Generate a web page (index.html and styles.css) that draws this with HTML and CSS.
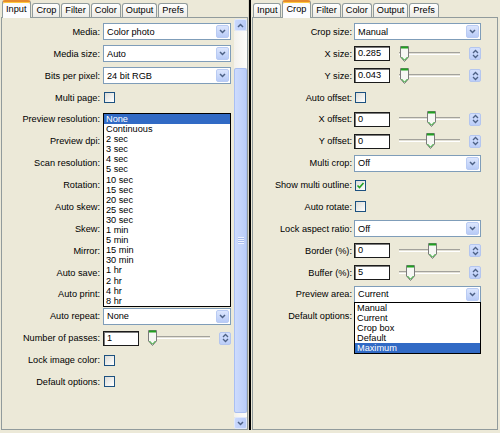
FILE: index.html
```
<!DOCTYPE html>
<html>
<head>
    <meta charset="UTF-8">
    <title>Scanner options</title>
    <link rel="stylesheet" href="styles.css">
</head>
<body>
<div class="window">
    <div class="pane pane-left">
        <div class="tabs">
            <span class="tab tab-on">Input</span>
            <span class="tab">Crop</span>
            <span class="tab">Filter</span>
            <span class="tab">Color</span>
            <span class="tab">Output</span>
            <span class="tab">Prefs</span>
        </div>
        <div class="page">
            <div class="form">
                <div class="row">
                    <span class="lbl">Media:</span>
                    <div class="ctrl"><div class="combo"><span class="combo-text">Color photo</span><span class="combo-btn"><svg width="7" height="5" viewBox="0 0 7 5"><path d="M1 1l2.5 2.5L6 1" fill="none" stroke="#4d6185" stroke-width="1.5"/></svg></span></div></div>
                </div>
                <div class="row">
                    <span class="lbl">Media size:</span>
                    <div class="ctrl"><div class="combo"><span class="combo-text">Auto</span><span class="combo-btn"><svg width="7" height="5" viewBox="0 0 7 5"><path d="M1 1l2.5 2.5L6 1" fill="none" stroke="#4d6185" stroke-width="1.5"/></svg></span></div></div>
                </div>
                <div class="row">
                    <span class="lbl">Bits per pixel:</span>
                    <div class="ctrl"><div class="combo"><span class="combo-text">24 bit RGB</span><span class="combo-btn"><svg width="7" height="5" viewBox="0 0 7 5"><path d="M1 1l2.5 2.5L6 1" fill="none" stroke="#4d6185" stroke-width="1.5"/></svg></span></div></div>
                </div>
                <div class="row">
                    <span class="lbl">Multi page:</span>
                    <div class="ctrl"><span class="check"></span></div>
                </div>
                <div class="row"><span class="lbl">Preview resolution:</span></div>
                <div class="row"><span class="lbl">Preview dpi:</span></div>
                <div class="row"><span class="lbl">Scan resolution:</span></div>
                <div class="row"><span class="lbl">Rotation:</span></div>
                <div class="row"><span class="lbl">Auto skew:</span></div>
                <div class="row"><span class="lbl">Skew:</span></div>
                <div class="row"><span class="lbl">Mirror:</span></div>
                <div class="row"><span class="lbl">Auto save:</span></div>
                <div class="row"><span class="lbl">Auto print:</span></div>
                <div class="row">
                    <span class="lbl">Auto repeat:</span>
                    <div class="ctrl"><div class="combo"><span class="combo-text">None</span><span class="combo-btn"><svg width="7" height="5" viewBox="0 0 7 5"><path d="M1 1l2.5 2.5L6 1" fill="none" stroke="#4d6185" stroke-width="1.5"/></svg></span></div></div>
                </div>
                <div class="row">
                    <span class="lbl">Number of passes:</span>
                    <div class="ctrl">
                        <span class="entry">1</span>
                        <span class="slider"><span class="track"></span><svg class="thumb" style="left: 0px" width="9" height="16" viewBox="0 0 9 16"><path d="M0.5 0.5h8v10.5l-4 4.5-4-4.5z" fill="#f7f7f4" stroke="#7b7b7b"/><path d="M1 1.5h7" stroke="#21a121" stroke-width="2"/><path d="M1.5 11l3 3.2 3-3.2" fill="none" stroke="#21a121"/></svg></span>
                        <span class="spin"><svg width="7" height="10" viewBox="0 0 7 10"><path d="M1 4l2.5-2.5L6 4M1 6l2.5 2.5L6 6" fill="none" stroke="#4d6185" stroke-width="1.3"/></svg></span>
                    </div>
                </div>
                <div class="row">
                    <span class="lbl">Lock image color:</span>
                    <div class="ctrl"><span class="check"></span></div>
                </div>
                <div class="row">
                    <span class="lbl">Default options:</span>
                    <div class="ctrl"><span class="check"></span></div>
                </div>
            </div>
            <div class="vscroll">
                <span class="sb-btn"><svg width="7" height="5" viewBox="0 0 7 5"><path d="M1 4l2.5-2.5L6 4" fill="none" stroke="#4d6185" stroke-width="1.5"/></svg></span>
                <span class="sb-track sb-track-top"></span>
                <span class="sb-thumb"><span class="sb-grip"></span></span>
                <span class="sb-track sb-track-bottom"></span>
                <span class="sb-btn"><svg width="7" height="5" viewBox="0 0 7 5"><path d="M1 1l2.5 2.5L6 1" fill="none" stroke="#4d6185" stroke-width="1.5"/></svg></span>
            </div>
            <ul class="popup popup-res">
                <li class="item item-sel">None</li>
                <li class="item">Continuous</li>
                <li class="item">2 sec</li>
                <li class="item">3 sec</li>
                <li class="item">4 sec</li>
                <li class="item">5 sec</li>
                <li class="item">10 sec</li>
                <li class="item">15 sec</li>
                <li class="item">20 sec</li>
                <li class="item">25 sec</li>
                <li class="item">30 sec</li>
                <li class="item">1 min</li>
                <li class="item">5 min</li>
                <li class="item">15 min</li>
                <li class="item">30 min</li>
                <li class="item">1 hr</li>
                <li class="item">2 hr</li>
                <li class="item">4 hr</li>
                <li class="item">8 hr</li>
            </ul>
        </div>
    </div>

    <div class="splitter"></div>

    <div class="pane pane-right">
        <div class="tabs">
            <span class="tab">Input</span>
            <span class="tab tab-on">Crop</span>
            <span class="tab">Filter</span>
            <span class="tab">Color</span>
            <span class="tab">Output</span>
            <span class="tab">Prefs</span>
        </div>
        <div class="page">
            <div class="form">
                <div class="row">
                    <span class="lbl">Crop size:</span>
                    <div class="ctrl"><div class="combo"><span class="combo-text">Manual</span><span class="combo-btn"><svg width="7" height="5" viewBox="0 0 7 5"><path d="M1 1l2.5 2.5L6 1" fill="none" stroke="#4d6185" stroke-width="1.5"/></svg></span></div></div>
                </div>
                <div class="row">
                    <span class="lbl">X size:</span>
                    <div class="ctrl">
                        <span class="entry">0.285</span>
                        <span class="slider"><span class="track"></span><svg class="thumb" style="left: 1px" width="9" height="16" viewBox="0 0 9 16"><path d="M0.5 0.5h8v10.5l-4 4.5-4-4.5z" fill="#f7f7f4" stroke="#7b7b7b"/><path d="M1 1.5h7" stroke="#21a121" stroke-width="2"/><path d="M1.5 11l3 3.2 3-3.2" fill="none" stroke="#21a121"/></svg></span>
                        <span class="spin"><svg width="7" height="10" viewBox="0 0 7 10"><path d="M1 4l2.5-2.5L6 4M1 6l2.5 2.5L6 6" fill="none" stroke="#4d6185" stroke-width="1.3"/></svg></span>
                    </div>
                </div>
                <div class="row">
                    <span class="lbl">Y size:</span>
                    <div class="ctrl">
                        <span class="entry">0.043</span>
                        <span class="slider"><span class="track"></span><svg class="thumb" style="left: 1px" width="9" height="16" viewBox="0 0 9 16"><path d="M0.5 0.5h8v10.5l-4 4.5-4-4.5z" fill="#f7f7f4" stroke="#7b7b7b"/><path d="M1 1.5h7" stroke="#21a121" stroke-width="2"/><path d="M1.5 11l3 3.2 3-3.2" fill="none" stroke="#21a121"/></svg></span>
                        <span class="spin"><svg width="7" height="10" viewBox="0 0 7 10"><path d="M1 4l2.5-2.5L6 4M1 6l2.5 2.5L6 6" fill="none" stroke="#4d6185" stroke-width="1.3"/></svg></span>
                    </div>
                </div>
                <div class="row">
                    <span class="lbl">Auto offset:</span>
                    <div class="ctrl"><span class="check"></span></div>
                </div>
                <div class="row">
                    <span class="lbl">X offset:</span>
                    <div class="ctrl">
                        <span class="entry">0</span>
                        <span class="slider"><span class="track"></span><svg class="thumb" style="left: 28px" width="9" height="16" viewBox="0 0 9 16"><path d="M0.5 0.5h8v10.5l-4 4.5-4-4.5z" fill="#f7f7f4" stroke="#7b7b7b"/><path d="M1 1.5h7" stroke="#21a121" stroke-width="2"/><path d="M1.5 11l3 3.2 3-3.2" fill="none" stroke="#21a121"/></svg></span>
                        <span class="spin"><svg width="7" height="10" viewBox="0 0 7 10"><path d="M1 4l2.5-2.5L6 4M1 6l2.5 2.5L6 6" fill="none" stroke="#4d6185" stroke-width="1.3"/></svg></span>
                    </div>
                </div>
                <div class="row">
                    <span class="lbl">Y offset:</span>
                    <div class="ctrl">
                        <span class="entry">0</span>
                        <span class="slider"><span class="track"></span><svg class="thumb" style="left: 27px" width="9" height="16" viewBox="0 0 9 16"><path d="M0.5 0.5h8v10.5l-4 4.5-4-4.5z" fill="#f7f7f4" stroke="#7b7b7b"/><path d="M1 1.5h7" stroke="#21a121" stroke-width="2"/><path d="M1.5 11l3 3.2 3-3.2" fill="none" stroke="#21a121"/></svg></span>
                        <span class="spin"><svg width="7" height="10" viewBox="0 0 7 10"><path d="M1 4l2.5-2.5L6 4M1 6l2.5 2.5L6 6" fill="none" stroke="#4d6185" stroke-width="1.3"/></svg></span>
                    </div>
                </div>
                <div class="row">
                    <span class="lbl">Multi crop:</span>
                    <div class="ctrl"><div class="combo"><span class="combo-text">Off</span><span class="combo-btn"><svg width="7" height="5" viewBox="0 0 7 5"><path d="M1 1l2.5 2.5L6 1" fill="none" stroke="#4d6185" stroke-width="1.5"/></svg></span></div></div>
                </div>
                <div class="row">
                    <span class="lbl">Show multi outline:</span>
                    <div class="ctrl"><span class="check"><svg width="9" height="9" viewBox="0 0 9 9"><path d="M1.5 4.5l2 2 4-4.5" fill="none" stroke="#21a121" stroke-width="1.6"/></svg></span></div>
                </div>
                <div class="row">
                    <span class="lbl">Auto rotate:</span>
                    <div class="ctrl"><span class="check"></span></div>
                </div>
                <div class="row">
                    <span class="lbl">Lock aspect ratio:</span>
                    <div class="ctrl"><div class="combo"><span class="combo-text">Off</span><span class="combo-btn"><svg width="7" height="5" viewBox="0 0 7 5"><path d="M1 1l2.5 2.5L6 1" fill="none" stroke="#4d6185" stroke-width="1.5"/></svg></span></div></div>
                </div>
                <div class="row">
                    <span class="lbl">Border (%):</span>
                    <div class="ctrl">
                        <span class="entry">0</span>
                        <span class="slider"><span class="track"></span><svg class="thumb" style="left: 29px" width="9" height="16" viewBox="0 0 9 16"><path d="M0.5 0.5h8v10.5l-4 4.5-4-4.5z" fill="#f7f7f4" stroke="#7b7b7b"/><path d="M1 1.5h7" stroke="#21a121" stroke-width="2"/><path d="M1.5 11l3 3.2 3-3.2" fill="none" stroke="#21a121"/></svg></span>
                        <span class="spin"><svg width="7" height="10" viewBox="0 0 7 10"><path d="M1 4l2.5-2.5L6 4M1 6l2.5 2.5L6 6" fill="none" stroke="#4d6185" stroke-width="1.3"/></svg></span>
                    </div>
                </div>
                <div class="row">
                    <span class="lbl">Buffer (%):</span>
                    <div class="ctrl">
                        <span class="entry">5</span>
                        <span class="slider"><span class="track"></span><svg class="thumb" style="left: 7px" width="9" height="16" viewBox="0 0 9 16"><path d="M0.5 0.5h8v10.5l-4 4.5-4-4.5z" fill="#f7f7f4" stroke="#7b7b7b"/><path d="M1 1.5h7" stroke="#21a121" stroke-width="2"/><path d="M1.5 11l3 3.2 3-3.2" fill="none" stroke="#21a121"/></svg></span>
                        <span class="spin"><svg width="7" height="10" viewBox="0 0 7 10"><path d="M1 4l2.5-2.5L6 4M1 6l2.5 2.5L6 6" fill="none" stroke="#4d6185" stroke-width="1.3"/></svg></span>
                    </div>
                </div>
                <div class="row">
                    <span class="lbl">Preview area:</span>
                    <div class="ctrl"><div class="combo"><span class="combo-text">Current</span><span class="combo-btn"><svg width="7" height="5" viewBox="0 0 7 5"><path d="M1 1l2.5 2.5L6 1" fill="none" stroke="#4d6185" stroke-width="1.5"/></svg></span></div></div>
                </div>
                <div class="row"><span class="lbl">Default options:</span></div>
            </div>
            <ul class="popup popup-area">
                <li class="item">Manual</li>
                <li class="item">Current</li>
                <li class="item">Crop box</li>
                <li class="item">Default</li>
                <li class="item item-sel">Maximum</li>
            </ul>
        </div>
    </div>
</div>
</body>
</html>
```

FILE: styles.css
```
body {
    margin: 0;
    background: #ece9d8;
    font-family: "Liberation Sans", Arial, sans-serif;
    font-size: 9.2px;
    color: #000;
    overflow: hidden;
}

.window {
    display: flex;
    width: 500px;
    height: 433px;
    padding-left: 1px;
    box-sizing: border-box;
}

.pane {
    display: flex;
    flex-direction: column;
}

.pane-left {
    width: 247px;
}

.pane-right {
    width: 246px;
}

.splitter {
    width: 4px;
    height: 430px;
    background: linear-gradient(to right, #d6d2c2 0, #d6d2c2 1px, #000 1px, #000 3px, #ece9d8 3px);
}

/* tabs */

.tabs {
    display: flex;
    align-items: flex-end;
    height: 17px;
    padding-left: 1px;
}

.tab {
    height: 14px;
    line-height: 13px;
    padding: 0 3px;
    margin-right: 1px;
    border: 1px solid #919b9c;
    border-bottom: none;
    border-radius: 3px 3px 0 0;
    background: linear-gradient(#ffffff, #ecebe6);
    box-sizing: border-box;
}

.tab-on {
    position: relative;
    z-index: 1;
    height: 18px;
    line-height: 15px;
    margin-bottom: -1px;
    border-top: 2px solid #e68b2c;
    box-shadow: inset 0 1px 0 #ffc73c;
    background: #fcfcfe;
    padding: 0 4px 0 3px;
}

/* page */

.page {
    position: relative;
    display: flex;
    height: 413px;
    border: 1px solid #919b9c;
    background: #ece9d8;
    box-sizing: border-box;
}

.form {
    flex: 1;
    padding-top: 3px;
}

.row {
    display: flex;
    align-items: center;
    height: 21.875px;
}

.lbl {
    text-align: right;
    white-space: nowrap;
}

.pane-left .lbl {
    width: 98px;
    margin-right: 3px;
}

.pane-right .lbl {
    width: 99px;
    margin-right: 2px;
}

.ctrl {
    display: flex;
    align-items: center;
}

.pane-left .ctrl {
    width: 128px;
}

.pane-right .ctrl {
    width: 127px;
}

/* combo box */

.combo {
    display: flex;
    align-items: center;
    width: 100%;
    height: 17px;
    padding-left: 3px;
    border: 1px solid #7f9db9;
    background: #fff;
    box-sizing: border-box;
}

.combo-text {
    flex: 1;
}

.combo-btn {
    display: flex;
    align-items: center;
    justify-content: center;
    width: 13px;
    height: 13px;
    margin-right: 1px;
    border: 1px solid #b9cbf3;
    border-radius: 2px;
    background: linear-gradient(#dce6fd, #b8cbf7);
    box-sizing: border-box;
}

/* check box */

.check {
    display: flex;
    align-items: center;
    justify-content: center;
    width: 11px;
    height: 11px;
    margin-left: 1px;
    border: 1px solid #1c5180;
    background: linear-gradient(135deg, #dcdcd7, #ffffff);
    box-sizing: border-box;
}

/* entry + slider + spin */

.entry {
    width: 36px;
    height: 15px;
    line-height: 13px;
    padding-left: 3px;
    border: 1px solid #1b1b1b;
    box-shadow: inset 1px 1px 0 #7a7a7a;
    background: #fff;
    box-sizing: border-box;
}

.slider {
    position: relative;
    flex: 1;
    height: 16px;
    margin: 0 9px;
}

.track {
    position: absolute;
    left: 0;
    right: 0;
    top: 6px;
    height: 3px;
    border-top: 1px solid #a3a29c;
    border-bottom: 1px solid #ffffff;
    background: #e2e0d6;
    box-sizing: border-box;
}

.thumb {
    position: absolute;
    top: 0;
}

.spin {
    display: flex;
    align-items: center;
    justify-content: center;
    width: 12px;
    height: 13px;
    border: 1px solid #b4c6ef;
    border-radius: 2px;
    background: linear-gradient(#d4e0fd, #bccef8);
    box-sizing: border-box;
}

/* vertical scrollbar */

.vscroll {
    display: flex;
    flex-direction: column;
    width: 13px;
    padding-top: 1px;
}

.sb-btn {
    display: flex;
    align-items: center;
    justify-content: center;
    height: 12px;
    border: 1px solid #dfe8fd;
    border-radius: 2px;
    background: linear-gradient(to right, #c9d8fd, #b8cbf8);
    box-sizing: border-box;
}

.sb-track {
    background: linear-gradient(to right, #f3f1ec, #fefefb);
}

.sb-track-top {
    height: 37px;
}

.sb-track-bottom {
    flex: 1;
}

.sb-thumb {
    display: flex;
    align-items: center;
    justify-content: center;
    height: 345px;
    border: 1px solid #a9bff2;
    border-radius: 2px;
    background: linear-gradient(to right, #cddbfd, #bacdf8);
    box-sizing: border-box;
}

.sb-grip {
    width: 6px;
    height: 7px;
    background: repeating-linear-gradient(#eef3ff 0, #eef3ff 1px, #a9bdee 1px, #a9bdee 2px);
}

/* open drop-down lists */

.popup {
    position: absolute;
    margin: 0;
    padding: 0;
    list-style: none;
    background: #fff;
    border: 1px solid #000;
    box-sizing: border-box;
}

.popup-res {
    left: 101px;
    top: 95px;
    width: 128px;
}

.popup-area {
    left: 101px;
    top: 284px;
    width: 127px;
}

.item {
    height: 10.1px;
    line-height: 10.1px;
    padding-left: 2px;
    white-space: nowrap;
}

.item-sel {
    background: #316ac5;
    color: #fff;
}
```
